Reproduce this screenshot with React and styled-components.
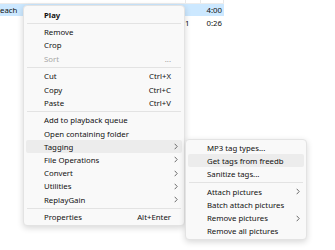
import React from 'react';
import styled, { createGlobalStyle } from 'styled-components';

const GlobalStyle = createGlobalStyle`
    html, body {
        margin: 0;
        padding: 0;
        background: #ffffff;
    }
    body {
        font-family: "Noto Sans", "Open Sans", sans-serif;
        color: #111111;
    }
`;

const tracks = [
    { title: 'each', number: '', duration: '4:00', selected: true },
    { title: '', number: '1', duration: '0:26', selected: false }
];

const mainItems = [
    { label: 'Play', bold: true },
    { sep: true },
    { label: 'Remove' },
    { label: 'Crop' },
    { label: 'Sort', disabled: true, shortcut: '...' },
    { sep: true },
    { label: 'Cut', shortcut: 'Ctrl+X' },
    { label: 'Copy', shortcut: 'Ctrl+C' },
    { label: 'Paste', shortcut: 'Ctrl+V' },
    { sep: true },
    { label: 'Add to playback queue' },
    { label: 'Open containing folder' },
    { label: 'Tagging', sub: true, active: true },
    { label: 'File Operations', sub: true },
    { label: 'Convert', sub: true },
    { label: 'Utilities', sub: true },
    { label: 'ReplayGain', sub: true },
    { sep: true },
    { label: 'Properties', shortcut: 'Alt+Enter' }
];

const taggingItems = [
    { label: 'MP3 tag types...' },
    { label: 'Get tags from freedb', active: true },
    { label: 'Sanitize tags...' },
    { sep: true },
    { label: 'Attach pictures', sub: true },
    { label: 'Batch attach pictures' },
    { label: 'Remove pictures', sub: true },
    { label: 'Remove all pictures' }
];

const Chevron = () => (
    <svg width='4' height='7' viewBox='0 0 4 7'>
        <path d='M0.7 0.8 L3.2 3.5 L0.7 6.2' fill='none' stroke='#5c5c5c' strokeWidth='0.9' />
    </svg>
);

const MenuList = ({ items, indent }) => items.map((item, idx) => {
    if (item.sep) return <Separator key={idx} />;
    return <Item key={idx} $indent={indent} $active={item.active} $disabled={item.disabled}>
        <Label $bold={item.bold}>{item.label}</Label>
        <Shortcut $disabled={item.disabled}>{item.shortcut}</Shortcut>
        <Arrow>{item.sub && <Chevron />}</Arrow>
    </Item>;
});

export default function App() {
    return <Screen>
        <GlobalStyle />
        <TrackList>
            <HeaderStrip>
                <HeaderCell $width='187px' />
                <HeaderCell $width='15px' />
                <HeaderCell $width='22px' />
            </HeaderStrip>
            {tracks.map((t, idx) => <Row key={idx} $selected={t.selected}>
                <Cell>{t.title}</Cell>
                <Cell $align='left'>{t.number}</Cell>
                <Cell $align='right'>{t.duration}</Cell>
            </Row>)}
        </TrackList>
        <Menu $left={23} $top={5} $width={162} $padTop={2}>
            <MenuList items={mainItems} indent={18} />
        </Menu>
        <Menu $left={185} $top={139} $width={122} $padTop={1}>
            <MenuList items={taggingItems} indent={19} />
        </Menu>
    </Screen>;
}

const Screen = styled.div`
    position: relative;
    width: 335px;
    height: 250px;
    overflow: hidden;
    background: #ffffff;
`;

const TrackList = styled.div`
    display: flex;
    flex-direction: column;
    width: 224px;
    font-size: 7.8px;
`;

const HeaderStrip = styled.div`
    display: flex;
    height: 3px;
    border-bottom: 1px solid #ececec;
`;

const HeaderCell = styled.div`
    width: ${props => props.$width};
    border-right: 1px solid #e8e8e8;
`;

const Row = styled.div`
    display: grid;
    grid-template-columns: 185px 1fr 24px;
    align-items: center;
    height: 12px;
    padding-right: 2px;
    background: ${props => props.$selected ? '#cce8ff' : 'transparent'};
    & + & {
        height: 13px;
    }
`;

const Cell = styled.div`
    text-align: ${props => props.$align || 'left'};
    white-space: nowrap;
    line-height: 12px;
`;

const Menu = styled.div`
    position: absolute;
    left: ${props => props.$left}px;
    top: ${props => props.$top}px;
    width: ${props => props.$width}px;
    box-sizing: border-box;
    display: flex;
    flex-direction: column;
    padding: ${props => props.$padTop}px 0 1px;
    background: #f9f9f9;
    border: 1px solid #e3e3e3;
    border-radius: 4px;
    box-shadow: 0 2px 6px rgba(0, 0, 0, 0.16);
    font-size: 7.8px;
`;

const Item = styled.div`
    display: grid;
    grid-template-columns: 1fr auto 11px;
    align-items: center;
    height: 13.2px;
    margin: 0 2px;
    padding-left: ${props => props.$indent}px;
    border-radius: 2px;
    background: ${props => props.$active ? '#ececec' : 'transparent'};
    color: ${props => props.$disabled ? '#a6a6a6' : '#111111'};
`;

const Label = styled.span`
    font-weight: ${props => props.$bold ? 700 : 400};
    white-space: nowrap;
`;

const Shortcut = styled.span`
    color: ${props => props.$disabled ? '#a6a6a6' : '#111111'};
    white-space: nowrap;
`;

const Arrow = styled.span`
    display: flex;
    align-items: center;
    padding-left: 3px;
`;

const Separator = styled.div`
    height: 1px;
    margin: 1.75px 3px;
    background: #e3e3e3;
`;
